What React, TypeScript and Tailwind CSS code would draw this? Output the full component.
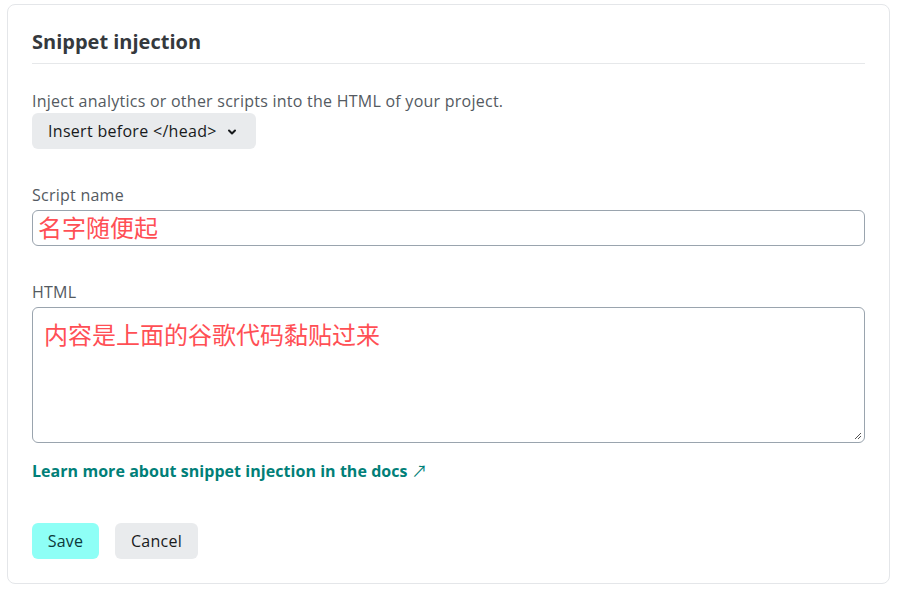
import React from 'react';

const fontStack = { fontFamily: '"Open Sans", "Noto Sans", "Noto Sans CJK SC", sans-serif' };

const App: React.FC = () => {
  return (
    <div className="min-h-[593px] w-[909px] bg-white pl-[7px] pt-[4px]" style={fontStack}>
      <div className="w-[883px] h-[580px] rounded-lg border border-[#e4e6e9] bg-white px-6 pt-[22px]">
        {/* Header */}
        <h2 className="text-[20px] font-bold leading-[30px] text-[#35393d] pb-[6px] border-b border-[#e6e8ea]">
          Snippet injection
        </h2>

        <p className="mt-[25px] text-[16px] leading-[24px] tracking-[0.25px] text-[#545a61]">
          Inject analytics or other scripts into the HTML of your project.
        </p>
        <button className="flex h-[36px] w-[224px] items-center gap-[10px] rounded-md bg-[#e9ebed] pl-4 text-[16px] tracking-[0.3px] text-[#181a1c]">
          Insert before &lt;/head&gt;
          <svg width="10" height="10" viewBox="0 0 10 10" className="mt-[1px]">
            <path d="M2 3.5 L5 6.5 L8 3.5" fill="none" stroke="#181a1c" strokeWidth="2" strokeLinecap="round" strokeLinejoin="round" />
          </svg>
        </button>

        {/* Script name */}
        <label className="mt-[34px] mb-[3px] block text-[16px] leading-[24px] tracking-[0.25px] text-[#545a61]">Script name</label>
        <div className="flex h-[36px] items-center rounded-md border border-[#9aa4ae] pl-[5px]">
          <span className="text-[24px] leading-none text-[#ff4f55]">名字随便起</span>
        </div>

        {/* HTML */}
        <label className="mt-[34px] mb-[3px] block text-[16px] leading-[24px] tracking-[0.25px] text-[#545a61]">HTML</label>
        <div className="relative h-[136px] rounded-md border border-[#9aa4ae] pl-[11px] pt-[12px]">
          <span className="text-[24px] leading-[30px] text-[#ff4f55]">内容是上面的谷歌代码黏贴过来</span>
          <svg width="8" height="8" viewBox="0 0 8 8" className="absolute bottom-[2px] right-[2px]">
            <path d="M7 1 L1 7 M7 4 L4 7" stroke="#555" strokeWidth="1" />
          </svg>
        </div>

        <a className="mt-[16px] inline-flex items-center gap-1 text-[16px] font-bold leading-[24px] tracking-[0.05px] text-[#017f78]" href="#">
          Learn more about snippet injection in the docs
          <span className="font-normal">↗</span>
        </a>

        <div className="mt-[40px] flex gap-4">
          <button className="h-[36px] w-[67px] rounded-md bg-[#8efff6] text-[16px] tracking-[0.25px] text-[#0d3a3b]">Save</button>
          <button className="h-[36px] w-[83px] rounded-md bg-[#e9ebed] text-[16px] tracking-[0.25px] text-[#181a1c]">Cancel</button>
        </div>
      </div>
    </div>
  );
};

export default App;
